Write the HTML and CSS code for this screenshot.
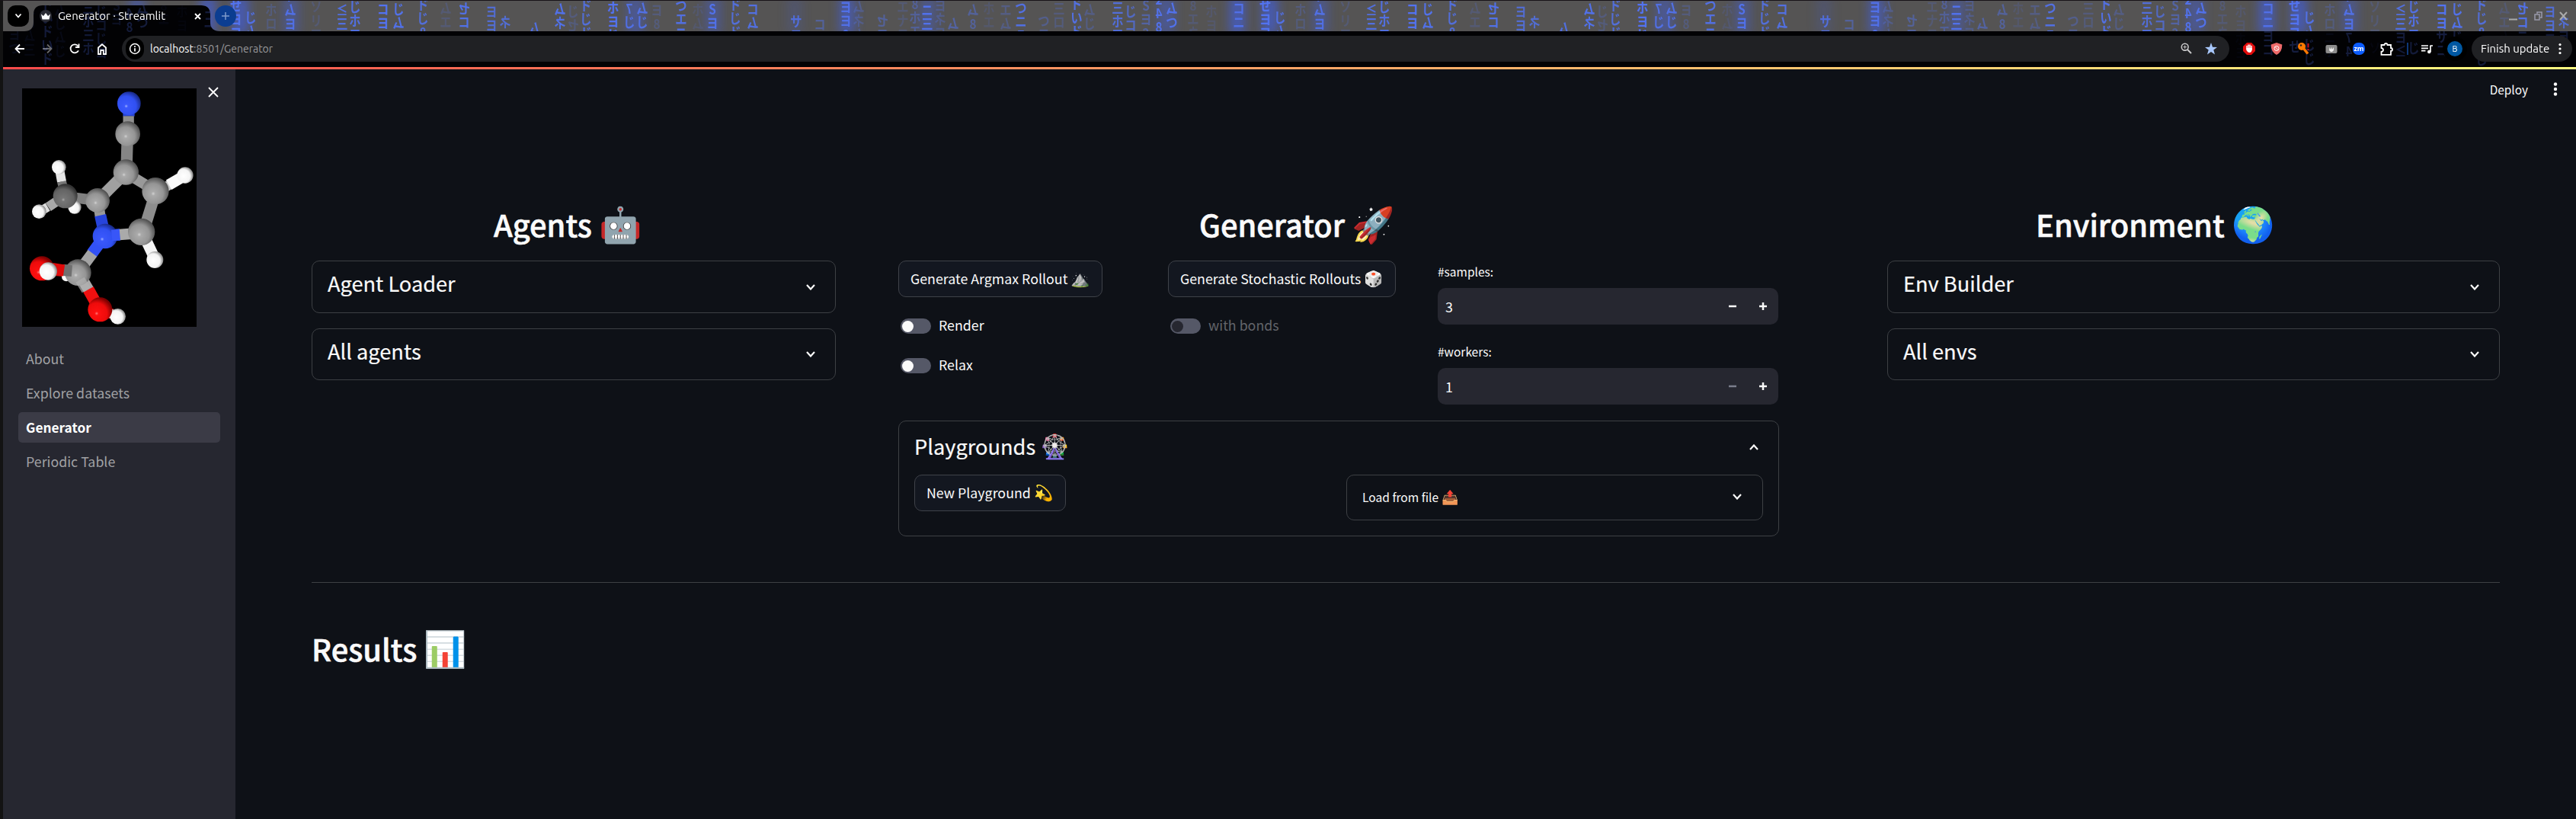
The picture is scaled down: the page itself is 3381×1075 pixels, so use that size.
FILE: index.html
```html
<!DOCTYPE html>
<html lang="en">
<head>
<meta charset="utf-8">
<title>Generator · Streamlit</title>
<link rel="stylesheet" href="styles.css">
</head>
<body>
<div class="window">
  <header class="chrome">
    <svg class="wallpaper" viewBox="0 0 3381 88" aria-hidden="true">
      <defs>
        <clipPath id="strip"><path id="stripShape" d="M4 1H3381V41H289Q276 41 276 29V19Q276 7 264 7H56Q44 7 44 19V29Q44 41 32 41H4Z"/></clipPath>
        <filter id="soft" x="-100%" y="-50%" width="300%" height="200%"><feGaussianBlur stdDeviation="7"/></filter>
      </defs>
      <rect width="3381" height="88" fill="#020204"/>
      <g id="dimRain" opacity=".25"></g>
      <g clip-path="url(#strip)">
        <rect width="3381" height="41" fill="#555454"/>
        <g id="brightRain"></g>
      </g>
      <rect width="4" height="88" fill="#131313"/>
      <rect width="3381" height="1" fill="#181318"/>
    </svg>
    <div class="tabs">
      <span class="tab-menu"><svg width="10" height="8" viewBox="0 0 10 8"><path d="M1.500 1.500 5 5.500 8.500 1.500" class="stroke"/></svg></span>
      <div class="tab">
        <span class="favicon"><svg width="12" height="9" viewBox="0 0 12 9"><path d="M0 1.500 3 4 6 0 9 4 12 1.500 10.500 8.500H1.500Z" fill="#fff"/></svg></span>
        <span class="tab-title">Generator · Streamlit</span>
        <svg width="9" height="9" viewBox="0 0 9 9"><path d="M1 1 8 8M8 1 1 8" class="stroke"/></svg>
      </div>
      <span class="new-tab"><svg width="10" height="10" viewBox="0 0 10 10"><path d="M5 0V10M0 5H10" stroke="#7f9bcb" stroke-width="1.500"/></svg></span>
      <div class="window-buttons">
        <svg width="11" height="12" viewBox="0 0 11 12"><path d="M0 10.500H11" stroke="#aaa" stroke-width="2"/></svg>
        <svg width="11" height="12" viewBox="0 0 11 12"><path d="M1 4H7V11H1ZM4 3V1H10V8H8" fill="none" stroke="#99a" stroke-width="1.500"/></svg>
        <svg width="11" height="12" viewBox="0 0 11 12"><path d="M1 1 10 11M10 1 1 11" stroke="#aaa" stroke-width="2"/></svg>
      </div>
    </div>
    <div class="toolbar">
      <div class="nav-icons">
        <svg width="14" height="14" viewBox="0 0 14 14"><path d="M13 7H2M7 1.500 1.500 7 7 12.500" class="stroke"/></svg>
        <svg width="14" height="14" viewBox="0 0 14 14" opacity=".4"><path d="M1 7H12M7 1.500 12.500 7 7 12.500" class="stroke"/></svg>
        <svg width="14" height="14" viewBox="0 0 14 14"><path d="M12 9.300A5.500 5.500 0 1 1 11.500 3.500M12.500 .5V5H8" class="stroke"/></svg>
        <svg width="14" height="15" viewBox="0 0 14 15"><path d="M2 14V5.500L7 1.300 12 5.500V14H8.800V9H5.200V14Z" class="stroke"/></svg>
      </div>
      <div class="omnibox">
        <span class="site-info"><svg width="16" height="16" viewBox="0 0 16 16"><circle cx="8" cy="8" r="6.400" class="stroke thin"/><path d="M8 7.200V11.500M8 4.300V6" class="stroke"/></svg></span>
        <span class="url"><b>localhost</b>:8501/Generator</span>
        <span class="omni-end">
          <svg width="15" height="15" viewBox="0 0 15 15" fill="none" stroke="#c9c9cb"><circle cx="5.700" cy="5.700" r="4.400" stroke-width="1.600"/><path d="M9 9 14 14" stroke-width="2"/><path d="M3.500 5.700H8M5.700 3.500V8"/></svg>
          <svg width="16" height="16" viewBox="0 0 16 16"><path d="M8 0 10 5.700 16 6 11.300 9.600 13 15.500 8 12 3 15.500 4.700 9.600 0 6 6 5.700Z" fill="#a8c7fa"/></svg>
        </span>
      </div>
      <div class="extensions">
        <svg width="16" height="16" viewBox="0 0 16 16"><path d="M5 0H11L16 5V11L11 16H5L0 11V5Z" fill="#e20d0d"/><path d="M5 8V4.500M7 8V3M9 8V3M11 9V4.500" stroke="#fff" stroke-width="1.500" stroke-linecap="round"/><path d="M4.300 7H11.700V9.500Q11 13 8.500 13 6 13 4.300 9.500Z" fill="#fff"/></svg>
        <svg width="16" height="16" viewBox="0 0 16 16"><path d="M8 0 15.300 2.500Q15.500 12 8 16 .5 12 .7 2.500Z" fill="#ee6a6a"/><circle cx="8" cy="7.500" r="3" fill="none" stroke="#fff"/><path d="M6 5.500 10 9.500" stroke="#fff"/></svg>
        <svg width="16" height="16" viewBox="0 0 16 16"><path d="M7 7 13 14.500" stroke="#ff7a00" stroke-width="3.500"/><circle cx="5" cy="5" r="5" fill="#ff7a00"/><circle cx="4" cy="3.500" r="1.200" fill="#222"/><path d="M13.500 1V6.500M13.500 8V10" stroke="#d01020" stroke-width="2"/></svg>
        <svg width="16" height="16" viewBox="0 0 16 16"><rect x=".5" y="3" width="15" height="11" rx="2" fill="#8d8d8d"/><path d="M5.500 6 7 9 8 5.500 9 9 11 6V10L9 12H7L5 10Z" fill="#eee"/></svg>
        <span class="zm">zm</span>
        <svg width="17" height="17" viewBox="0 0 17 17"><path d="M1.500 3H5.500Q5.700 1 7.500 1T9.500 3H14V7Q16 7 16 9T14 11V15.800H1.500V12Q4 11.500 4 9.500T1.500 7Z" class="stroke"/></svg>
        <i class="divider"></i>
        <svg width="15" height="13" viewBox="0 0 15 13"><path d="M0 2H9M0 5.300H9M0 8.600H5.500" stroke="#fff" stroke-width="1.700"/><path d="M12 1.500V10M12 2H15" stroke="#fff" stroke-width="1.700"/><circle cx="10.300" cy="10" r="2.300" fill="#fff"/></svg>
        <span class="profile">B</span>
      </div>
      <div class="update">Finish update<svg width="4" height="16" viewBox="0 0 4 16" fill="#fff"><circle cx="2" cy="2.500" r="1.600"/><circle cx="2" cy="8" r="1.600"/><circle cx="2" cy="13.500" r="1.600"/></svg></div>
    </div>
  </header>
  <div class="decoration"></div>

  <div class="app">
    <aside class="sidebar">
      <div class="sidebar-top">
        <svg class="molecule" viewBox="87 78 687 939" role="img" aria-label="Molecule">
          <defs>
            <radialGradient id="gC" cx=".42" cy=".6" r=".62"><stop offset="0" stop-color="#d2d2d2"/><stop offset=".12" stop-color="#aaa"/><stop offset=".6" stop-color="#959595"/><stop offset="1" stop-color="#4c4c4c"/></radialGradient>
            <radialGradient id="gD" cx=".42" cy=".65" r=".62"><stop offset="0" stop-color="#aaa"/><stop offset=".12" stop-color="#767676"/><stop offset=".7" stop-color="#636363"/><stop offset="1" stop-color="#333"/></radialGradient>
            <radialGradient id="gN" cx=".38" cy=".62" r=".65"><stop offset="0" stop-color="#9db0ff"/><stop offset=".12" stop-color="#3a58fc"/><stop offset=".65" stop-color="#3050f2"/><stop offset="1" stop-color="#182a88"/></radialGradient>
            <radialGradient id="gO" cx=".36" cy=".66" r=".66"><stop offset="0" stop-color="#ff7777"/><stop offset=".12" stop-color="#ff1010"/><stop offset=".65" stop-color="#ee0b0b"/><stop offset="1" stop-color="#7c0000"/></radialGradient>
            <radialGradient id="gH" cx=".4" cy=".55" r=".62"><stop offset="0" stop-color="#fff"/><stop offset=".65" stop-color="#f4f4f4"/><stop offset="1" stop-color="#777"/></radialGradient>
          </defs>
          <rect x="87" y="78" width="687" height="939"/>
          <g fill="none">
            <path d="M507 140V188" stroke="#2744d4" stroke-width="46"/>
            <path d="M506 187V250" stroke="#8f8f8f" stroke-width="43"/>
            <path d="M502 260 498 400" stroke="#858585" stroke-width="46"/>
            <path d="M495 410 385 520" stroke="#a0a0a0" stroke-width="45"/>
            <path d="M495 410 610 480" stroke="#999" stroke-width="42"/>
            <path d="M612 490 570 625" stroke="#8d8d8d" stroke-width="45"/>
            <path d="M385 520 250 503" stroke="#808080" stroke-width="42"/>
            <path d="M250 505 190 545" stroke="#a8a8a8" stroke-width="38"/>
            <path d="M256 500 243 445" stroke="#777" stroke-width="36"/>
            <path d="M243 445 232 385" stroke="#e5e5e5" stroke-width="36"/>
            <path d="M188 545 154 565" stroke="#ddd" stroke-width="36"/>
            <path d="M386 525 395 582" stroke="#999" stroke-width="42"/>
            <path d="M395 578 412 655" stroke="#2744dc" stroke-width="46"/>
            <path d="M412 658 472 654" stroke="#304ef0" stroke-width="46"/>
            <path d="M470 654 550 648" stroke="#aaa" stroke-width="44"/>
            <path d="M412 660 362 728" stroke="#3251f5" stroke-width="46"/>
            <path d="M364 727 310 800" stroke="#a4a4a4" stroke-width="44"/>
            <path d="M650 468 680 450" stroke="#ccc" stroke-width="38"/>
            <path d="M665 458 730 420" stroke="#fafafa" stroke-width="44"/>
            <path d="M570 665 608 745" stroke="#f5f5f5" stroke-width="44"/>
            <path d="M310 805 350 873" stroke="#aaa" stroke-width="43"/>
            <path d="M348 870 390 945" stroke="#f01010" stroke-width="46"/>
            <path d="M305 800 248 795" stroke="#707070" stroke-width="48"/>
            <path d="M250 796 185 790" stroke="#d00909" stroke-width="46"/>
            <path d="M395 950 440 966" stroke="#d50b0b" stroke-width="42"/>
            <path d="M435 964 465 976" stroke="#ddd" stroke-width="36"/>
          </g>
          <circle cx="294" cy="546" r="26" fill="url(#gH)"/>
          <circle cx="261" cy="820" r="18" fill="url(#gH)"/>
          <circle cx="508" cy="137" r="46" fill="url(#gN)"/>
          <circle cx="503" cy="257" r="49" fill="url(#gC)"/>
          <circle cx="496" cy="408" r="50" fill="url(#gC)"/>
          <circle cx="612" cy="482" r="53" fill="url(#gC)"/>
          <circle cx="557" cy="643" r="53" fill="url(#gC)"/>
          <circle cx="384" cy="519" r="48" fill="url(#gC)"/>
          <circle cx="257" cy="502" r="48" fill="url(#gD)"/>
          <circle cx="414" cy="660" r="49" fill="url(#gN)"/>
          <path d="M440 657 472 654" stroke="#3856f8" stroke-width="44"/>
          <circle cx="307" cy="803" r="52" fill="url(#gC)"/>
          <path d="M283 797 248 794" stroke="#707070" stroke-width="44"/>
          <circle cx="165" cy="787" r="48" fill="url(#gO)"/>
          <path d="M252 795 205 788" stroke="#e00a0a" stroke-width="46"/>
          <circle cx="464" cy="976" r="31" fill="url(#gH)"/>
          <circle cx="394" cy="949" r="48" fill="url(#gO)"/>
          <circle cx="190" cy="798" r="35" fill="url(#gH)"/>
          <circle cx="232" cy="388" r="28" fill="url(#gH)"/>
          <circle cx="154" cy="563" r="28" fill="url(#gH)"/>
          <circle cx="729" cy="420" r="32" fill="url(#gH)"/>
          <circle cx="610" cy="753" r="33" fill="url(#gH)"/>
          <path d="M315 832 340 872" stroke="#b2b2b2" stroke-width="40" opacity=".7"/>
        </svg>
        <svg class="close" width="14" height="14" viewBox="0 0 14 14"><path d="M1 1 13 13M13 1 1 13" class="stroke"/></svg>
      </div>
      <nav>
        <a>About</a>
        <a>Explore datasets</a>
        <a class="active">Generator</a>
        <a>Periodic Table</a>
      </nav>
    </aside>

    <main>
      <div class="app-bar"><span>Deploy</span><svg width="6" height="18" viewBox="0 0 6 18" fill="#fafafa"><circle cx="3" cy="2.500" r="2.200"/><circle cx="3" cy="9" r="2.200"/><circle cx="3" cy="15.500" r="2.200"/></svg></div>
      <div class="columns">
        <section class="agents">
          <h2>Agents <span class="emoji">🤖</span></h2>
          <div class="expander"><h3>Agent Loader</h3><svg class="chev" viewBox="0 0 12 8"><path d="M1 1 6 6.500 11 1"/></svg></div>
          <div class="expander second"><h3>All agents</h3><svg class="chev" viewBox="0 0 12 8"><path d="M1 1 6 6.500 11 1"/></svg></div>
        </section>

        <section class="generator">
          <h2>Generator <span class="emoji">🚀</span></h2>
          <div class="controls">
            <div class="control-col">
              <button>Generate Argmax Rollout <span class="emoji">⛰️</span></button>
              <label class="toggle"><i></i><span>Render</span></label>
              <label class="toggle"><i></i><span>Relax</span></label>
            </div>
            <div class="control-col">
              <button>Generate Stochastic Rollouts <span class="emoji">🎲</span></button>
              <label class="toggle disabled"><i></i><span>with bonds</span></label>
            </div>
            <div class="numbers">
              <label>#samples:</label>
              <div class="number"><span>3</span><svg viewBox="0 0 50 10"><path d="M0 5H10M40 5H50M45 0V10"/></svg></div>
              <label>#workers:</label>
              <div class="number"><span>1</span><svg viewBox="0 0 50 10"><path class="off" d="M0 5H10"/><path d="M40 5H50M45 0V10"/></svg></div>
            </div>
          </div>
          <div class="playgrounds">
            <div class="playgrounds-head"><h3>Playgrounds <span class="emoji">🎡</span></h3><svg class="chev" viewBox="0 0 12 8"><path d="M1 7 6 1.500 11 7"/></svg></div>
            <div class="playgrounds-body">
              <button>New Playground <span class="emoji">💫</span></button>
              <div class="loader"><span>Load from file <span class="emoji">📤</span></span><svg class="chev" viewBox="0 0 12 8"><path d="M1 1 6 6.500 11 1"/></svg></div>
            </div>
          </div>
        </section>

        <section class="environment">
          <h2>Environment <span class="emoji">🌍</span></h2>
          <div class="expander"><h3>Env Builder</h3><svg class="chev" viewBox="0 0 12 8"><path d="M1 1 6 6.500 11 1"/></svg></div>
          <div class="expander second"><h3>All envs</h3><svg class="chev" viewBox="0 0 12 8"><path d="M1 1 6 6.500 11 1"/></svg></div>
        </section>
      </div>
      <hr>
      <h2 class="results">Results <span class="emoji">📊</span></h2>
    </main>
  </div>
</div>
<script src="rain.js"></script>
</body>
</html>
```
FILE: rain.js
```js
// Theme wallpaper of the browser frame: glyph columns, tiled every 1351px.
// Each column: x, first baseline, brightness, glyphs from top to bottom.
const columns = [
  [15, 18, .9, 'コニヨ'], [50, 14, 1, 'せヨヨ'], [69, 30, .9, 'じムじ'], [96, 20, .25, 'ホロニ'],
  [121, 2, .9, '4ムヨ7'], [155, 16, .2, 'ソリロ'], [189, 20, .9, '≤三ヨ'], [206, 16, .9, 'じホエ'],
  [243, 19, 1, 'コヨサ'], [263, 19, .95, 'じムじ'], [295, 13, .85, 'ドじ8'], [325, 18, .2, 'ムエ'],
  [349, 18, .95, 'セコニ'], [385, 22, .8, 'ヨヨ'], [403, 36, .8, 'ネヨ'], [442, 44, .9, 'ムホ'],
  [475, 19, .95, 'ムネ2'], [492, 22, .25, 'じセ'], [509, 14, .85, 'ドじ'], [545, 17, 1, 'ホヨじ'],
  [566, 18, .9, '7じ2'], [583, 18, .9, 'ムじ'], [602, 20, .25, 'ヨ8'], [634, 14, .9, 'つエニ'],
  [656, 20, .15, 'ホム'], [675, 19, .95, 'Sヨ7'], [705, 13, .85, 'ドじ'], [728, 19, .9, 'コムホ'],
  [785, 35, .85, 'サヨ'], [816, 39, .45, 'コヨ'], [850, 16, .9, 'ヨヨ8'], [867, 16, .3, 'ムネム'],
  [898, 34, .45, 'セコ'], [925, 16, .2, 'エナヨホ'], [941, 12, .4, '8ホエ'],
  [957, 20, .95, 'ニ三ム'], [974, 14, .3, 'ヨネ'], [991, 38, .5, 'ムじ'], [1017, 20, .45, 'ム8リ'],
  [1038, 18, .15, 'ホエロ'], [1060, 20, .3, 'エムホ'], [1080, 17, .9, 'つニ7'], [1110, 34, .35, 'つヨ'],
  [1130, 18, .25, '三ロム'], [1153, 12, .9, 'ドい'], [1170, 20, .3, 'ムじ'], [1207, 17, .85, '三ホ'],
  [1224, 22, .7, 'じコ'], [1244, 14, .5, 'Sヨ2'], [1261, 6, .95, '248'], [1278, 18, .95, 'ムつヨ'],
  [1306, 14, .2, '8エネ'], [1330, 22, .15, 'ホヨ']
];
const mirrored = 'ムネセ47';
const glows = [[12, 1], [55, 1], [121, .6], [573, .7], [675, .6], [782, .25], [851, .9], [957, .6], [1270, .7]];
const rowHeight = 18;

function rain(rows, visible) {
  let out = '';
  for (const start of [-1091, 260, 1611, 2962]) {
    for (const [x, y, light, glyphs] of columns) {
      const text = (glyphs + glyphs + glyphs).slice(0, rows);
      [...text].forEach((glyph, i) => {
        const px = start + x;
        const py = y + i * rowHeight;
        if (px > 12 && px < 3372 && visible(px, py)) {
          const sx = mirrored.includes(glyph) ? -.85 : .85;
          out += `<text transform="translate(${px} ${py}) scale(${sx} 1)" opacity="${light}">${glyph}</text>`;
        }
      });
    }
  }
  return out;
}

let glowRects = '';
for (const start of [-1091, 260, 1611, 2962]) {
  for (const [x, power] of glows) {
    glowRects += `<rect x="${start + x - 9}" y="-5" width="20" height="50" fill="#3f5fe8" opacity="${power * .65}" filter="url(#soft)"/>`;
  }
}
const inTab = x => x < 285;
document.getElementById('brightRain').innerHTML = glowRects + rain(3, (x, y) => !inTab(x) && y < 54);
document.getElementById('dimRain').innerHTML = rain(5, (x, y) => y < 86 && (inTab(x) ? x < 150 || y < 50 : x > 2935 && y >= 54));
```
FILE: styles.css
```css
* { box-sizing: border-box; }
body {
  margin: 0;
  background: #0e1117;
  color: #fafafa;
  font: 17.8px/28px "Noto Sans CJK JP", "Noto Sans", sans-serif;
}
h2, h3 { margin: 0; }
svg { display: block; flex: none; }
.stroke { fill: none; stroke: #fff; stroke-width: 1.8; }
.thin { stroke-width: 1.5; }
.emoji { font-size: 1.14em; line-height: 1; }
.window { width: 3381px; height: 1075px; display: flex; flex-direction: column; overflow: hidden; }

/* Browser frame */
.chrome { position: relative; height: 88px; flex: none; font: 15px/20px Ubuntu, "Open Sans", sans-serif; color: #fff; }
.wallpaper { position: absolute; inset: 0; width: 3381px; height: 88px; }
.wallpaper text { font: 700 18px "Noto Sans CJK JP", sans-serif; fill: #5273f0; text-anchor: middle; }
.tabs { position: relative; height: 41px; display: flex; align-items: center; padding: 1px 11px 0 10px; }
.tab-menu { width: 28px; height: 28px; border-radius: 10px; background: #000; display: grid; place-items: center; }
.tab { width: 212px; margin-left: 14px; display: flex; align-items: center; }
.favicon { width: 16px; height: 16px; border-radius: 8px; background: #2a2b33; display: grid; place-items: center; }
.tab-title { margin-left: 8px; width: 180px; white-space: nowrap; }
.new-tab { width: 28px; height: 28px; margin-left: 18px; border-radius: 14px; background: #0b3d91; display: grid; place-items: center; }
.window-buttons { margin-left: auto; display: flex; gap: 22px; }
.toolbar { position: relative; height: 46px; display: flex; align-items: center; padding: 0 5px 0 19px; }
.nav-icons { display: flex; align-items: center; gap: 22px; width: 141px; }
.omnibox { width: 2766px; height: 34px; border-radius: 17px; background: #202124; display: flex; align-items: center; padding: 0 16px 0 5px; }
.site-info { width: 24px; height: 28px; border-radius: 13px; background: #000; display: grid; place-items: center; }
.url { margin-left: 8px; font-size: 14px; color: #9a9a9c; }
.url b { font-weight: 400; color: #fff; }
.omni-end { margin-left: auto; display: flex; gap: 17px; }
.extensions { display: flex; align-items: center; gap: 20px; margin-left: 18px; width: 288px; }
.zm { width: 16px; height: 16px; border-radius: 7px; background: #0b5cff; font: bold 9px/15px "Open Sans", sans-serif; text-align: center; }
.divider { width: 2px; height: 16px; background: #0d3778; margin: 0 -3px 0 -2px; }
.profile { width: 20px; height: 20px; border-radius: 10px; background: #0058a3; font-size: 11px; text-align: center; margin-left: -1px; box-shadow: 0 0 0 6px #000; }
.update { margin-left: auto; width: 132px; height: 34px; border-radius: 17px; background: #202124; display: flex; align-items: center; justify-content: space-between; padding: 0 14px 0 12px; white-space: nowrap; }
.decoration { height: 3px; flex: none; margin-left: 4px; background: linear-gradient(90deg, #ff4b4b, #fffd80); }

/* App */
.app { flex: 1; display: flex; border-left: 4px solid #131313; }
.sidebar { width: 305px; flex: none; background: #262730; padding: 25px 20px 0; }
.sidebar-top { display: flex; margin-left: 5px; }
.molecule { width: 229px; height: 313px; }
.close { margin: -2px 0 0 15px; }
nav { margin-top: 22px; display: flex; flex-direction: column; gap: 5px; }
nav a { height: 40px; line-height: 39px; padding-left: 10px; border-radius: 5px; color: #a0a1a4; }
nav .active { background: #3b3b46; color: #fff; font-weight: 700; font-size: 17.3px; }
main { flex: 1; padding: 0 100px; }
.app-bar { display: flex; justify-content: flex-end; align-items: center; gap: 33px; height: 52px; margin-right: -76px; font-size: 15.4px; }
.columns { display: flex; margin-top: 117px; height: 502px; }
h2 { font-size: 39.8px; line-height: 68px; height: 68px; font-weight: 500; white-space: nowrap; -webkit-text-stroke: .6px #fafafa; }
h2 .emoji { -webkit-text-stroke: 0; }
h3 { font-size: 27.2px; line-height: 40px; height: 40px; font-weight: 400; white-space: nowrap; -webkit-text-stroke: .2px #fafafa; }
h3 .emoji { -webkit-text-stroke: 0; }
.agents { width: 688px; }
.agents h2 { padding-left: 239px; }
.generator { width: 1156px; margin-left: 82px; }
.generator h2 { padding-left: 395px; }
.environment { width: 804px; margin-left: 142px; }
.environment h2 { padding-left: 195px; }
.columns h2 { margin-bottom: 14px; }
.expander { height: 69px; border: 1px solid #3d4044; border-radius: 10px; padding: 8px 26px 0 20px; display: flex; justify-content: space-between; }
.expander.second { height: 68px; margin-top: 20px; }
.expander .chev { margin-top: 22px; }
.expander.second .chev { margin-top: 21px; }
.chev { width: 12px; height: 8px; fill: none; stroke: #fafafa; stroke-width: 2.2; }
button { display: block; height: 48px; border: 1px solid #3f4249; border-radius: 10px; background: #131720; color: #fafafa; font: inherit; line-height: 28px; padding: 0 16px 2px 15px; white-space: nowrap; }
.controls { display: flex; height: 210px; }
.control-col { width: 354px; }
.toggle { display: flex; align-items: center; height: 20px; margin: 28px 0 0 3px; gap: 10px; }
.toggle + .toggle { margin-top: 32px; }
.toggle span { padding-bottom: 4px; }
.toggle i { width: 40px; height: 20px; border-radius: 10px; background: #555867; padding: 2.5px 2px; }
.toggle i::before { content: ""; display: block; width: 15px; height: 15px; border-radius: 50%; background: #fafafa; }
.toggle.disabled { color: #62646a; }
.toggle.disabled i::before { background: #262730; }
.numbers { width: 447px; }
.numbers label { display: block; font-size: 15.5px; line-height: 28px; height: 36px; }
.number { height: 48px; border-radius: 10px; background: #262730; display: flex; align-items: center; justify-content: space-between; padding: 0 15px 0 10px; margin-bottom: 21px; }
.number svg { width: 50px; height: 10px; fill: none; stroke: #fafafa; stroke-width: 2.5; }
.number .off { stroke: #7b7e8c; }
.playgrounds { height: 152px; border: 1px solid #3d4044; border-radius: 10px; padding: 11px 20px 0; }
.playgrounds-head { display: flex; justify-content: space-between; align-items: center; padding: 0 6px 0 0; height: 42px; }
.playgrounds-head .chev { margin-top: 4px; }
.playgrounds-body { display: flex; justify-content: space-between; margin-top: 17px; }
.loader { width: 547px; height: 60px; border: 1px solid #3d4044; border-radius: 10px; padding: 0 27px 2px 20px; display: flex; align-items: center; justify-content: space-between; font-size: 15.6px; }
.loader .emoji { font-size: 1.15em; }
hr { border: 0; height: 1px; margin: 2px 0 0; background: #3d4044; }
.results { margin-top: 52px; }
```
